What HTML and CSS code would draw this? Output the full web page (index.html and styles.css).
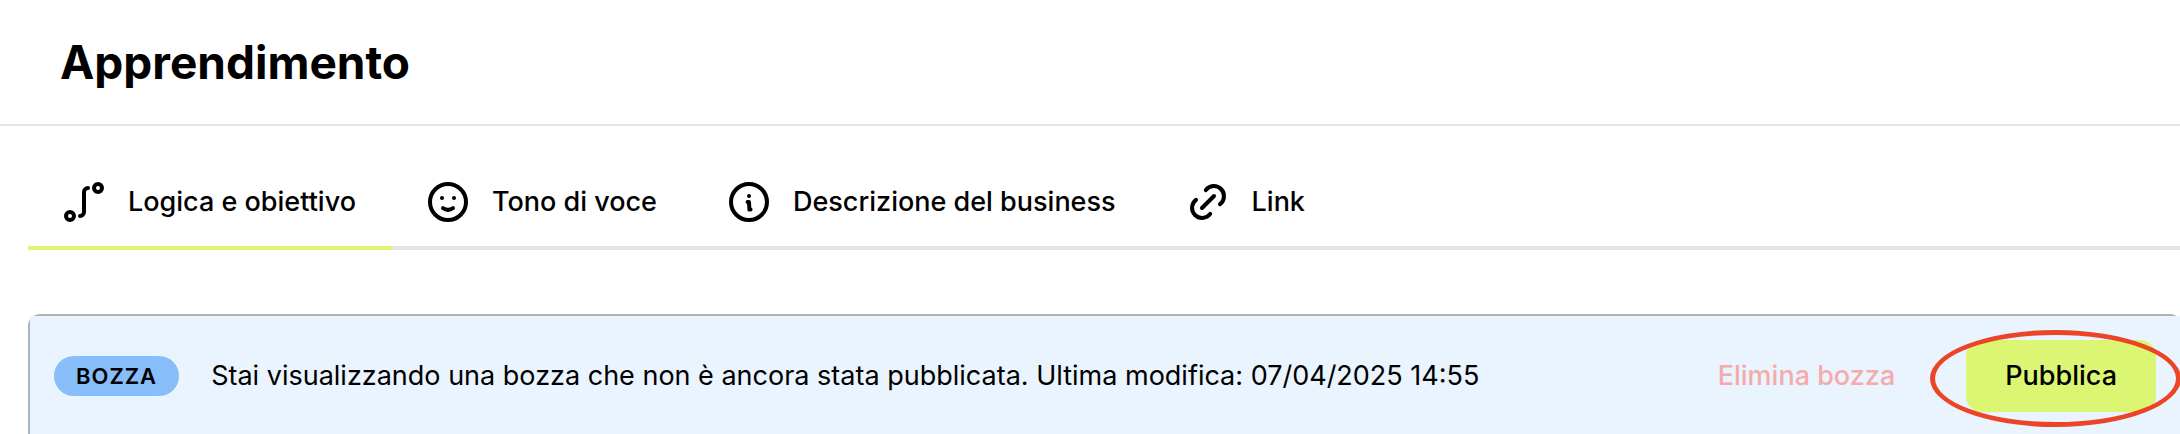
FILE: index.html
```html
<!DOCTYPE html>
<html lang="it">
<head>
<meta charset="utf-8">
<meta name="viewport" content="width=device-width, initial-scale=1">
<title>Apprendimento</title>
<link rel="stylesheet" href="styles.css">
</head>
<body>
<header class="page-header">
  <h1 class="page-title">Apprendimento</h1>
</header>
<main class="content">
  <nav class="tabs" aria-label="Sezioni">
    <a class="tab tab-active" href="#logica" aria-current="page">
      <svg class="icon" viewBox="0 0 48 48" aria-hidden="true">
        <circle cx="10" cy="38" r="4"/>
        <circle cx="38" cy="10" r="4"/>
        <path d="M20 38a4 4 0 0 0 4-4V14a4 4 0 0 1 4-4"/>
      </svg>
      Logica e obiettivo
    </a>
    <a class="tab" href="#tono">
      <svg class="icon" viewBox="0 0 48 48" aria-hidden="true">
        <circle cx="24" cy="24" r="18"/>
        <circle class="dot" cx="18" cy="20" r="2"/>
        <circle class="dot" cx="30" cy="20" r="2"/>
        <path d="M19 30.2q5 3.4 10 0"/>
      </svg>
      Tono di voce
    </a>
    <a class="tab" href="#descrizione">
      <svg class="icon" viewBox="0 0 48 48" aria-hidden="true">
        <circle cx="24" cy="24" r="18"/>
        <circle class="dot" cx="24" cy="18" r="2"/>
        <path d="M22.6 24H24l.4 7.6h1.2"/>
      </svg>
      Descrizione del business
    </a>
    <a class="tab" href="#link">
      <svg class="icon" viewBox="0 0 48 48" aria-hidden="true">
        <path d="M18 30 30 18"/>
        <path d="M21.8 12.1A10.1 10.1 0 1 1 36 26.2"/>
        <path d="M26.2 35.9A10.1 10.1 0 1 1 12 21.8"/>
      </svg>
      Link
    </a>
  </nav>
  <section class="panel">
    <div class="banner">
      <span class="badge">BOZZA</span>
      <p class="message">Stai visualizzando una bozza che non è ancora stata pubblicata. Ultima modifica: 07/04/2025 14:55</p>
      <div class="actions">
        <button class="button button-danger" type="button">Elimina bozza</button>
        <div class="highlighted">
          <button class="button button-primary" type="button">Pubblica</button>
          <span class="ring" aria-hidden="true"></span>
        </div>
      </div>
    </div>
  </section>
</main>
</body>
</html>
```
FILE: styles.css
```css
* {
  box-sizing: border-box;
}

body {
  margin: 0;
  overflow: hidden;
  background: #fff;
  color: #000;
  font-family: Inter, "Liberation Sans", sans-serif;
  font-size: 27px;
  line-height: 40px;
}

.page-header {
  padding: 32px 60px 32px;
  border-bottom: 2px solid #e4e4e6;
}

.page-title {
  margin: 0;
  font-size: 46px;
  line-height: 60px;
  font-weight: 700;
}

.content {
  padding: 32px 0 0 28px;
}

.tabs {
  display: flex;
  box-shadow: inset 0 -4px #e1e1e8;
}

.tab {
  display: flex;
  align-items: center;
  gap: 20px;
  padding: 20px 36px 20px 32px;
  border-bottom: 4px solid transparent;
  color: inherit;
  font-weight: 500;
  text-decoration: none;
  white-space: nowrap;
}

.tab-active {
  border-bottom-color: #dcf573;
}

.icon {
  flex: none;
  width: 48px;
  height: 48px;
  fill: none;
  stroke: #000;
  stroke-width: 4;
  stroke-linecap: round;
  stroke-linejoin: round;
}

.dot {
  fill: #000;
  stroke: none;
}

.panel {
  margin: 64px -2px 0 0;
  border: 2px solid #abb3bb;
  border-bottom: 0;
  border-radius: 12px 12px 0 0;
}

.banner {
  display: flex;
  align-items: center;
  gap: 32px;
  padding: 24px 24px 22px;
  background: #eaf4fe;
}

.badge {
  padding: 0 22px;
  border-radius: 20px;
  background: #87bdf8;
  font-size: 22px;
  font-weight: 600;
  letter-spacing: 1px;
}

.message {
  flex: 1;
  margin: 0;
}

.actions {
  display: flex;
  gap: 32px;
}

.button {
  height: 72px;
  padding: 0 39px;
  border: 0;
  border-radius: 16px;
  background: transparent;
  color: #000;
  font: inherit;
  font-weight: 500;
  white-space: nowrap;
}

.button-danger {
  color: #f5abab;
}

.button-primary {
  background: #dcf573;
}

.highlighted {
  position: relative;
  display: flex;
}

.ring {
  position: absolute;
  inset: -10px -25px -15px -36px;
  border: 5px solid #ec4427;
  border-radius: 50%;
}
```
